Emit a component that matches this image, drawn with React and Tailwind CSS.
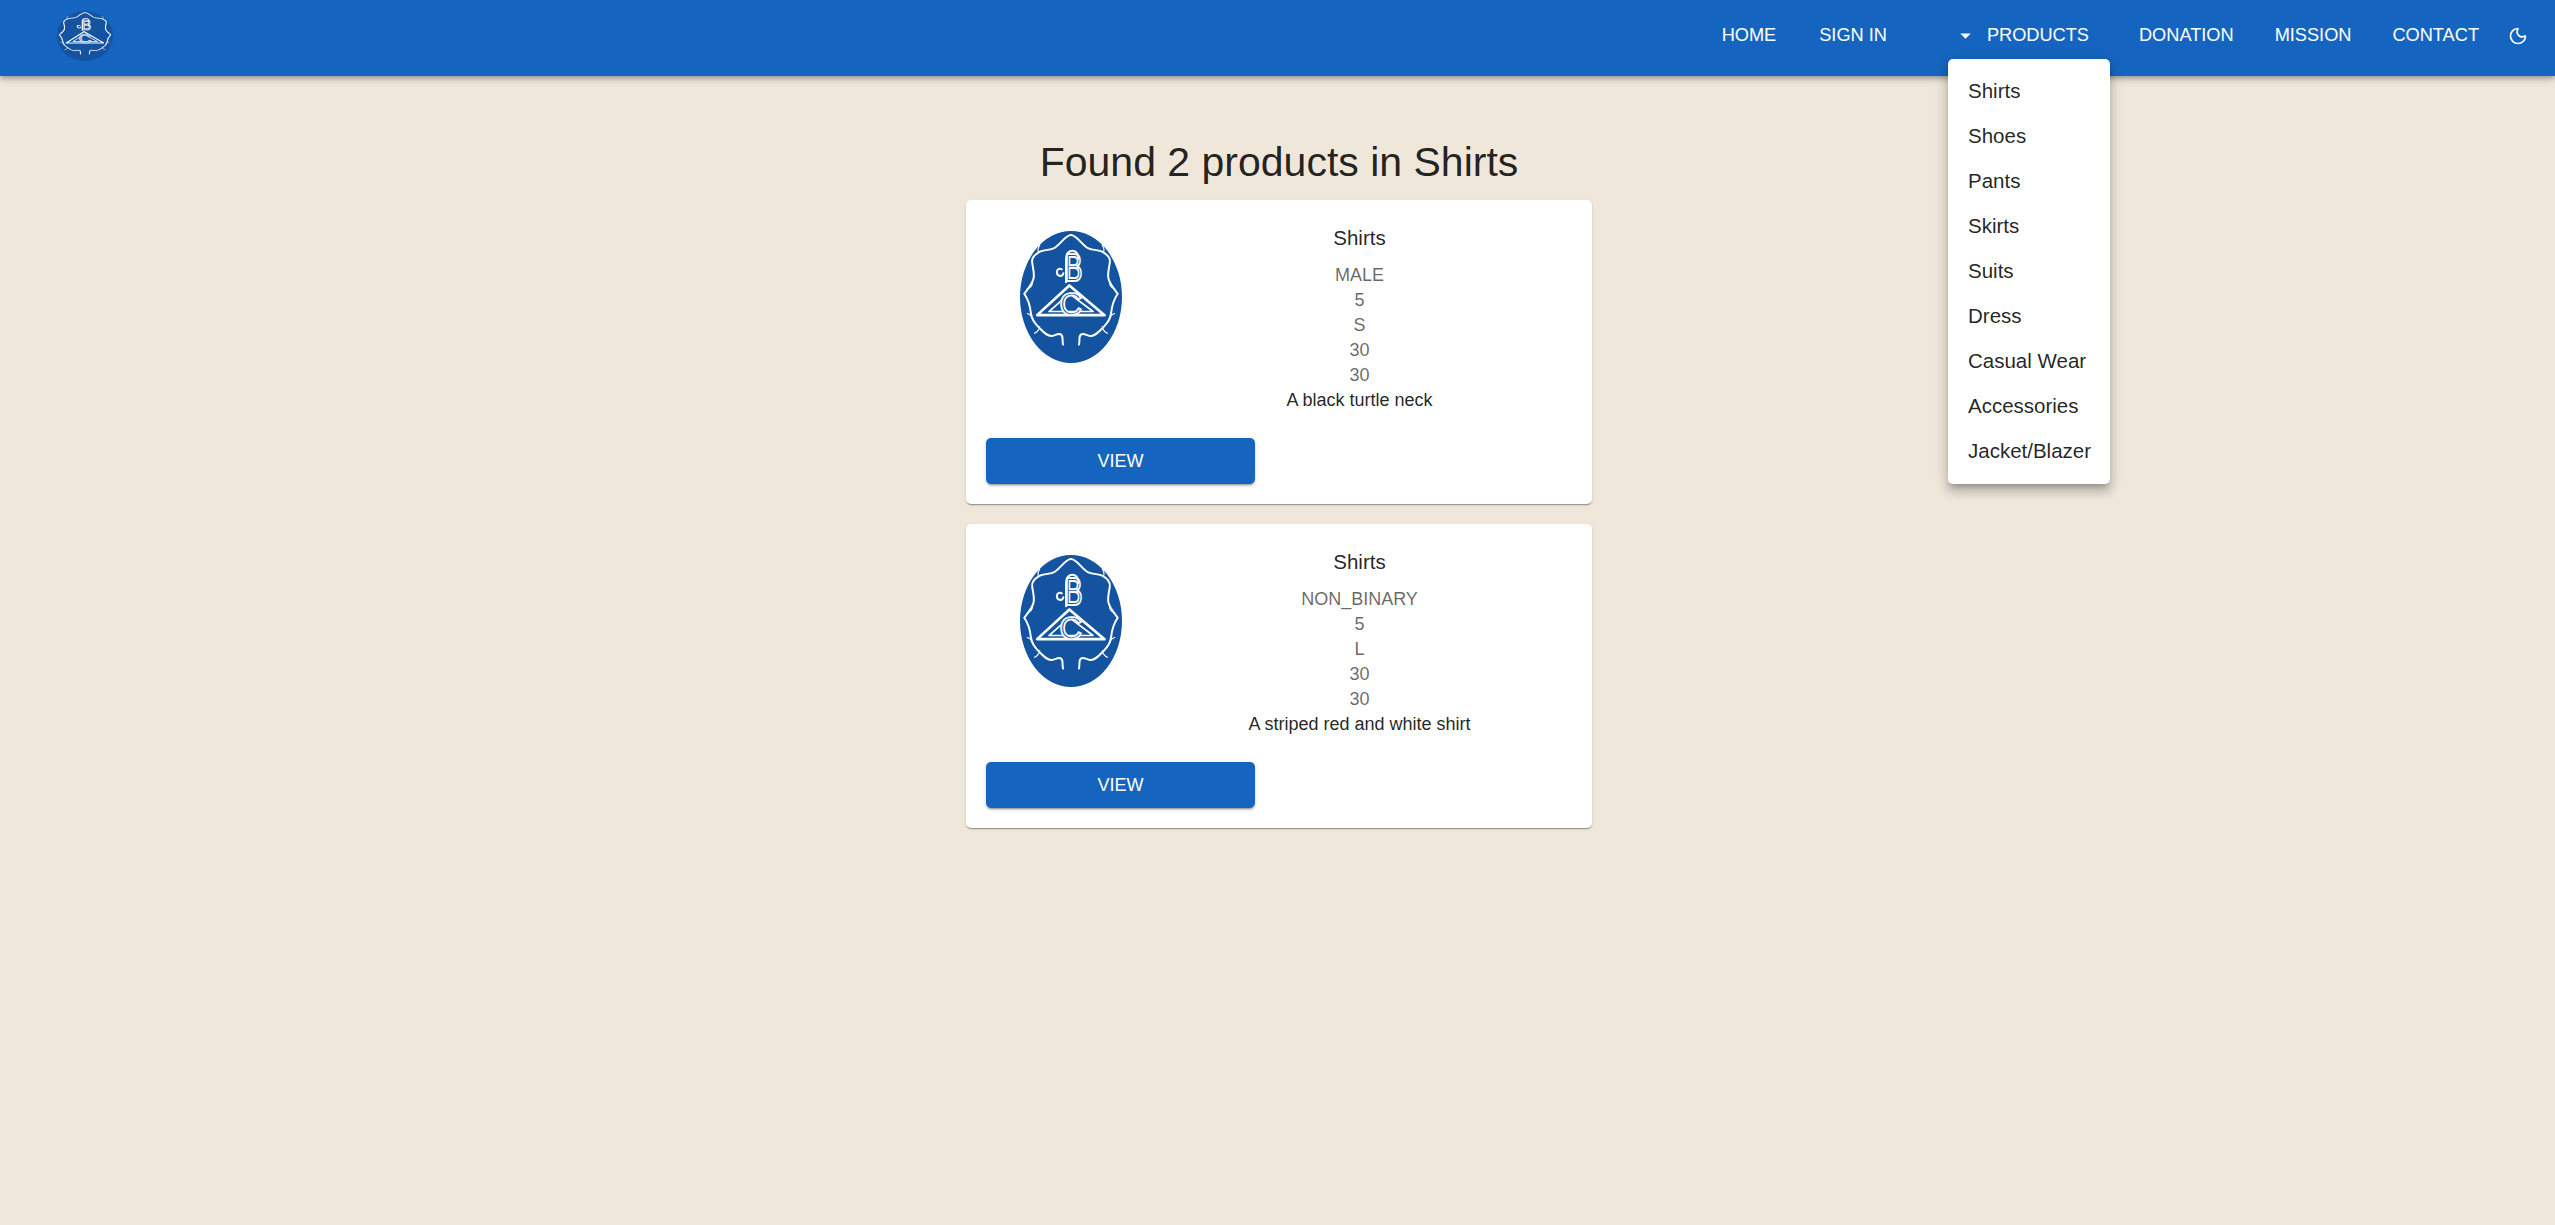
import { Moon } from 'lucide-react';

const categories = ['Shirts', 'Shoes', 'Pants', 'Skirts', 'Suits', 'Dress', 'Casual Wear', 'Accessories', 'Jacket/Blazer'];

const products = [
  { id: 1, gender: 'MALE', qty: 5, size: 'S', price: 30, stock: 30, description: 'A black turtle neck' },
  { id: 2, gender: 'NON_BINARY', qty: 5, size: 'L', price: 30, stock: 30, description: 'A striped red and white shirt' },
];

// BC hanger logo, stretched to whatever box it is put in
function Logo({ className }) {
  return (
    <svg viewBox="0 0 310 400" preserveAspectRatio="none" className={className}>
      <ellipse cx="155" cy="200" rx="155" ry="200" fill="#13539f" />
      <g fill="none" stroke="#fff" strokeWidth="6" strokeLinecap="round" strokeLinejoin="round">
        <path d="M155 12c-16 0-28 24-48 38-16 10-36 6-48 13-14 8-24 20-22 32 2 18 8 34 4 50-4 16-16 30-28 45 14 20 18 40 20 58 2 20 12 32 24 44 14 14 26 28 40 26 12-2 20-10 28-4 8 6 2 20 6 30" />
        <path d="M155 12c16 0 28 24 48 38 16 10 36 6 48 13 14 8 24 20 22 32-2 18-8 34-4 50 4 16 16 30 28 45-14 20-18 40-20 58-2 20-12 32-24 44-14 14-26 28-40 26-12-2-20-10-28-4-8 6-2 20-6 30" />
        <path d="M56 63c-4-8 0-14 4-20M254 63c4-8 0-14-4-20M22 175c8-2 14-8 16-16M288 175c-8-2-14-8-16-16M22 250c10 2 14 8 16 18M288 250c-10 2-14 8-16 18M44 310c10-4 14-10 16-20M266 310c-10-4-14-10-16-20" strokeWidth="3.5" />
        <path d="M150 165 52 255h205z" strokeWidth="8" />
        <path d="M150 190 88 244h134z" strokeWidth="5" />
        <path d="M132 128c-4 14-20 8-20-4 0-8 8-12 15-8" />
        <path d="M140 155V85c0-34 38-34 38 0" />
      </g>
      <text transform="translate(136 150) scale(0.7 1)" fontFamily="'Liberation Sans', sans-serif" fontSize="115" fill="none" stroke="#fff" strokeWidth="6">B</text>
      <text x="120" y="256" fontFamily="'Liberation Sans', sans-serif" fontSize="95" fill="#13539f" stroke="#fff" strokeWidth="5">C</text>
    </svg>
  );
}

function NavLink({ children, className }) {
  return <a className={`text-[18.2px] leading-[25px] text-white uppercase ${className}`}>{children}</a>;
}

function ProductCard({ product }) {
  return (
    <div className="bg-white rounded-[5px] w-[626px] h-[304px] p-5 shadow-[0_2px_1px_-1px_rgba(0,0,0,0.2),0_1px_1px_0_rgba(0,0,0,0.14),0_1px_3px_0_rgba(0,0,0,0.12)] flex flex-col">
      <div className="flex h-[218px]">
        <div className="w-[252px] shrink-0 pl-[34px] pt-[11px]">
          <Logo className="w-[102px] h-[132px]" />
        </div>
        <div className="w-[243px] text-center text-[18px] leading-[25px] pt-[3px]">
          <div className="text-[20.5px] leading-[30px] text-[rgba(0,0,0,0.87)] mb-[10px] whitespace-nowrap">Shirts</div>
          <div className="text-[rgba(0,0,0,0.6)]">{product.gender}</div>
          <div className="text-[rgba(0,0,0,0.6)]">{product.qty}</div>
          <div className="text-[rgba(0,0,0,0.6)]">{product.size}</div>
          <div className="text-[rgba(0,0,0,0.6)]">{product.price}</div>
          <div className="text-[rgba(0,0,0,0.6)]">{product.stock}</div>
          <div className="text-[rgba(0,0,0,0.87)] whitespace-nowrap">{product.description}</div>
        </div>
      </div>
      <button className="w-[269px] h-[46px] rounded-[5px] bg-[#1565c0] text-white text-[18px] uppercase shadow-[0_3px_1px_-2px_rgba(0,0,0,0.2),0_2px_2px_0_rgba(0,0,0,0.14),0_1px_5px_0_rgba(0,0,0,0.12)]">
        View
      </button>
    </div>
  );
}

export default function App() {
  return (
    <div className="min-h-screen bg-[#efe7da] font-['Liberation_Sans',Arial,sans-serif] relative">
      <header className="h-[76px] bg-[#1565c0] flex items-center pl-[57px] pr-[27px] pb-[5px] shadow-[0_2px_4px_-1px_rgba(0,0,0,0.2),0_4px_5px_0_rgba(0,0,0,0.14),0_1px_10px_0_rgba(0,0,0,0.12)] relative z-10">
        <Logo className="w-[56px] h-[50px]" />
        <nav className="ml-auto flex items-center">
          <NavLink>Home</NavLink>
          <NavLink className="ml-[43px]">Sign in</NavLink>
          <svg viewBox="0 0 24 24" className="w-[25px] h-[25px] fill-white ml-[66px]"><path d="m7 10 5 5 5-5z" /></svg>
          <NavLink className="ml-[9px]">Products</NavLink>
          <NavLink className="ml-[50px]">Donation</NavLink>
          <NavLink className="ml-[41px]">Mission</NavLink>
          <NavLink className="ml-[41px]">Contact</NavLink>
          <Moon className="ml-[29px] text-white" size={20} strokeWidth={2} />
        </nav>
      </header>

      <div className="absolute left-[1948px] top-[59px] w-[162px] z-20 bg-white rounded-[5px] py-[10px] shadow-[0_5px_5px_-3px_rgba(0,0,0,0.2),0_8px_10px_1px_rgba(0,0,0,0.14),0_3px_14px_2px_rgba(0,0,0,0.12)]">
        {categories.map(category => (
          <div key={category} className="px-5 pt-[6.5px] pb-[8.5px] text-[20.5px] leading-[30px] text-[rgba(0,0,0,0.87)] whitespace-nowrap">{category}</div>
        ))}
      </div>

      <main className="flex flex-col items-center pt-[56px] pl-[3px]">
        <h1 className="text-[41px] leading-[60px] text-[rgba(0,0,0,0.87)] mb-[8px]">Found 2 products in Shirts</h1>
        <div className="flex flex-col gap-5">
          {products.map(product => (
            <ProductCard key={product.id} product={product} />
          ))}
        </div>
      </main>
    </div>
  );
}
